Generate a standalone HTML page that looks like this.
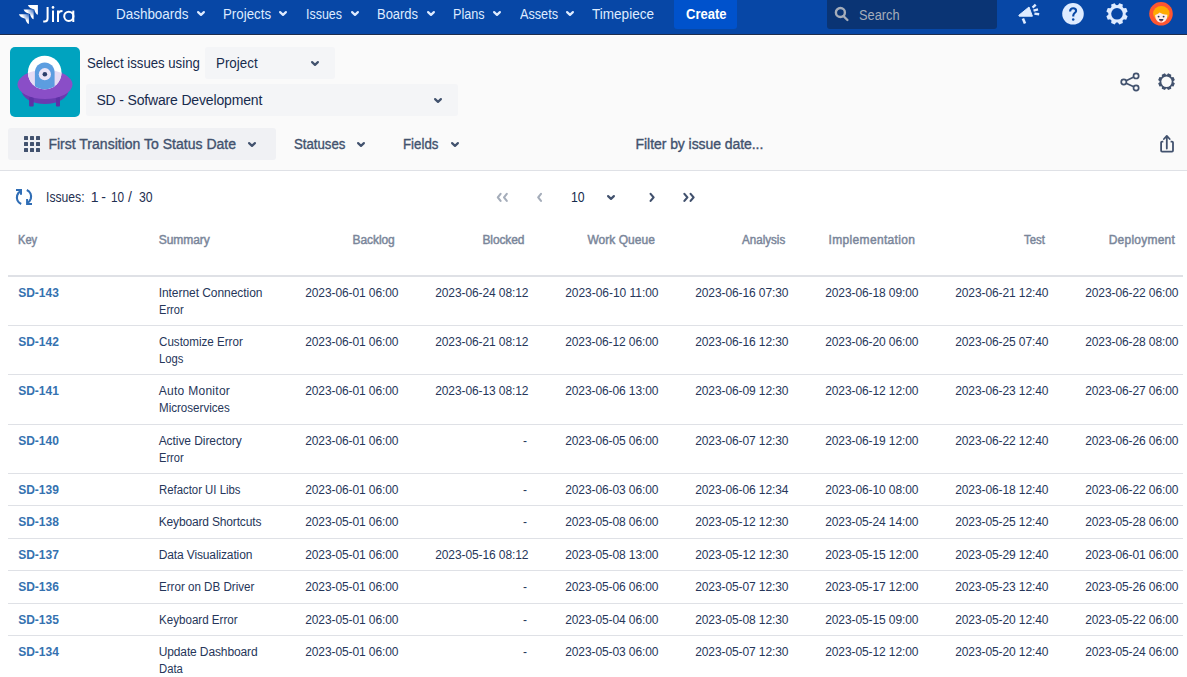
<!DOCTYPE html>
<html><head><meta charset="utf-8"><style>
html,body{margin:0;padding:0;}
body{width:1187px;height:677px;overflow:hidden;position:relative;background:#FFFFFF;font-family:"Liberation Sans",sans-serif;}
.t{position:absolute;white-space:nowrap;}
svg{overflow:visible}
</style></head><body>
<div style="position:absolute;left:0;top:0;width:1187px;height:34px;background:#0747A6"></div>
<div style="position:absolute;left:0;top:34px;width:1187px;height:1px;background:#1E2D4D"></div>
<div style="position:absolute;left:0;top:35px;width:1187px;height:1px;background:#FFFFFF"></div>
<svg style="position:absolute;left:0;top:0" width="90" height="34" viewBox="0 0 90 34">
<defs><radialGradient id="g1" gradientUnits="userSpaceOnUse" cx="37.9" cy="5" r="9"><stop offset="0.15" stop-color="#5b86cc"/><stop offset="0.75" stop-color="#fff"/></radialGradient></defs>
<g><path d="M27.9 5 H37.9 V14.7 C36.2 14.3 35 12.6 34.3 9.5 C31.4 8.8 28.8 7.6 27.9 5 Z" fill="#fff"/></g>
<g transform="translate(-4.3 4.6)"><path d="M27.9 5 H37.9 V14.7 C36.2 14.3 35 12.6 34.3 9.5 C31.4 8.8 28.8 7.6 27.9 5 Z" fill="url(#g1)"/></g>
<g transform="translate(-9 9.2)"><path d="M27.9 5 H37.9 V14.7 C36.2 14.3 35 12.6 34.3 9.5 C31.4 8.8 28.8 7.6 27.9 5 Z" fill="url(#g1)"/></g>
<path d="M47.6 7 V18.2 C47.6 20.8 46.4 21.6 44.6 21.6 H43.2" stroke="#fff" stroke-width="2" fill="none"/>
<circle cx="53" cy="7.4" r="1.3" fill="#fff"/>
<path d="M53 10.6 V22" stroke="#fff" stroke-width="2" fill="none"/>
<path d="M58 10.6 V22 M58 15 C58 12.3 59.8 11 62.5 11" stroke="#fff" stroke-width="2" fill="none"/>
<circle cx="68.8" cy="16.3" r="4.6" stroke="#fff" stroke-width="2" fill="none"/>
<path d="M73.3 10.6 V22" stroke="#fff" stroke-width="2" fill="none"/>
</svg>
<div class="t" style="left:115.50px;top:5.00px;font-size:14px;line-height:18px;color:#DEEBFF;transform:scaleX(0.9603);transform-origin:0 0;">Dashboards</div>
<svg style="position:absolute;left:195.4px;top:9px" width="12" height="9"><path d="M3.1 3.1 L6.0 5.9 L8.9 3.1" stroke="#DEEBFF" stroke-width="2.2" fill="none" stroke-linecap="round" stroke-linejoin="round"/></svg>
<div class="t" style="left:223.00px;top:5.00px;font-size:14px;line-height:18px;color:#DEEBFF;transform:scaleX(0.9496);transform-origin:0 0;">Projects</div>
<svg style="position:absolute;left:277.4px;top:9px" width="12" height="9"><path d="M3.1 3.1 L6.0 5.9 L8.9 3.1" stroke="#DEEBFF" stroke-width="2.2" fill="none" stroke-linecap="round" stroke-linejoin="round"/></svg>
<div class="t" style="left:305.50px;top:5.00px;font-size:14px;line-height:18px;color:#DEEBFF;transform:scaleX(0.8900);transform-origin:0 0;">Issues</div>
<svg style="position:absolute;left:348.6px;top:9px" width="12" height="9"><path d="M3.1 3.1 L6.0 5.9 L8.9 3.1" stroke="#DEEBFF" stroke-width="2.2" fill="none" stroke-linecap="round" stroke-linejoin="round"/></svg>
<div class="t" style="left:376.80px;top:5.00px;font-size:14px;line-height:18px;color:#DEEBFF;transform:scaleX(0.9245);transform-origin:0 0;">Boards</div>
<svg style="position:absolute;left:424.8px;top:9px" width="12" height="9"><path d="M3.1 3.1 L6.0 5.9 L8.9 3.1" stroke="#DEEBFF" stroke-width="2.2" fill="none" stroke-linecap="round" stroke-linejoin="round"/></svg>
<div class="t" style="left:453.00px;top:5.00px;font-size:14px;line-height:18px;color:#DEEBFF;transform:scaleX(0.9029);transform-origin:0 0;">Plans</div>
<svg style="position:absolute;left:491px;top:9px" width="12" height="9"><path d="M3.1 3.1 L6.0 5.9 L8.9 3.1" stroke="#DEEBFF" stroke-width="2.2" fill="none" stroke-linecap="round" stroke-linejoin="round"/></svg>
<div class="t" style="left:519.50px;top:5.00px;font-size:14px;line-height:18px;color:#DEEBFF;transform:scaleX(0.9048);transform-origin:0 0;">Assets</div>
<svg style="position:absolute;left:564.2px;top:9px" width="12" height="9"><path d="M3.1 3.1 L6.0 5.9 L8.9 3.1" stroke="#DEEBFF" stroke-width="2.2" fill="none" stroke-linecap="round" stroke-linejoin="round"/></svg>
<div class="t" style="left:592.00px;top:5.00px;font-size:14px;line-height:18px;color:#DEEBFF;transform:scaleX(0.9680);transform-origin:0 0;">Timepiece</div>
<div style="position:absolute;left:674px;top:-3px;width:63px;height:31.8px;background:#0052CC;border-radius:3px"></div>
<div class="t" style="left:685.80px;top:5.00px;font-size:14px;line-height:18px;color:#FFFFFF;font-weight:bold;transform:scaleX(0.9289);transform-origin:0 0;">Create</div>
<div style="position:absolute;left:827px;top:-3px;width:170px;height:31.5px;background:#0A3474;border-radius:3px"></div>
<svg style="position:absolute;left:833px;top:6px" width="18" height="16"><circle cx="7.4" cy="6.5" r="4.5" stroke="#A5ADBA" stroke-width="2.4" fill="none"/><path d="M10.4 10 L14.4 14" stroke="#A5ADBA" stroke-width="2.4" stroke-linecap="round"/></svg>
<div class="t" style="left:859.40px;top:6.00px;font-size:14px;line-height:18px;color:#A5ADBA;transform:scaleX(0.9154);transform-origin:0 0;">Search</div>
<svg style="position:absolute;left:1010px;top:0" width="177" height="34">
<path d="M8.8 15.3 L19 7 L22.4 16.2 L9.2 16.2 Z" fill="#DEEBFF" stroke="#DEEBFF" stroke-width="1" stroke-linejoin="round"/>
<path d="M12.9 18.4 L15 23.4" stroke="#DEEBFF" stroke-width="2.6"/>
<path d="M22.6 7.7 L25.7 4.6 M23.5 10.6 L28 9.3 M24.4 13.6 L29.2 14.3" stroke="#DEEBFF" stroke-width="2.4"/>
<circle cx="63" cy="13.8" r="10.8" fill="#DEEBFF"/>
<path d="M60.1 11.4 C60.1 9.3 61.5 8.3 63.2 8.3 C65 8.3 66.1 9.5 66.1 10.9 C66.1 12.6 63.3 13.1 63.3 15.3 V16.4" stroke="#0747A6" stroke-width="2.1" fill="none"/>
<circle cx="63.2" cy="19.4" r="1.25" fill="#0747A6"/>
</svg>
<svg style="position:absolute;left:1100px;top:0" width="36" height="34"><path d="M25.66 14.68 L27.64 16.15 L26.19 19.66 L23.74 19.30 L23.46 19.63 L23.15 19.95 L22.83 20.26 L22.50 20.54 L22.86 22.99 L19.35 24.44 L17.88 22.46 L17.44 22.49 L17.00 22.50 L16.56 22.49 L16.12 22.46 L14.65 24.44 L11.14 22.99 L11.50 20.54 L11.17 20.26 L10.85 19.95 L10.54 19.63 L10.26 19.30 L7.81 19.66 L6.36 16.15 L8.34 14.68 L8.31 14.24 L8.30 13.80 L8.31 13.36 L8.34 12.92 L6.36 11.45 L7.81 7.94 L10.26 8.30 L10.54 7.97 L10.85 7.65 L11.17 7.34 L11.50 7.06 L11.14 4.61 L14.65 3.16 L16.12 5.14 L16.56 5.11 L17.00 5.10 L17.44 5.11 L17.88 5.14 L19.35 3.16 L22.86 4.61 L22.50 7.06 L22.83 7.34 L23.15 7.65 L23.46 7.97 L23.74 8.30 L26.19 7.94 L27.64 11.45 L25.66 12.92 L25.69 13.36 L25.70 13.80 L25.69 14.24Z" fill="#DEEBFF"/><circle cx="17" cy="13.8" r="5.8" fill="#0747A6"/></svg>
<svg style="position:absolute;left:1145px;top:0" width="32" height="34">
<circle cx="16" cy="13.8" r="11.8" fill="#FF5630"/>
<ellipse cx="16.3" cy="13.4" rx="8.2" ry="7.4" fill="#FFAB00"/>
<path d="M10.2 15 C11.8 14.6 13.6 13.6 14.6 12.6 C16.2 13.8 19 14.6 22.4 14.8 C22.4 19.5 20 22.6 16.3 22.6 C12.6 22.6 10.2 19.8 10.2 15Z" fill="#FFEBE6"/>
<circle cx="13.6" cy="16.6" r="0.95" fill="#253858"/><circle cx="18.6" cy="16.6" r="0.95" fill="#253858"/>
<path d="M14 19.1 H18.4 C18.4 20.6 17.5 21.3 16.2 21.3 C14.9 21.3 14 20.6 14 19.1Z" fill="#253858"/>
<path d="M15 20.7 C15.6 21.2 16.8 21.2 17.4 20.7" stroke="#FF5630" stroke-width="0.9" fill="none"/>
</svg>
<div style="position:absolute;left:0;top:36px;width:1187px;height:134px;background:#FAFAFA"></div>
<div style="position:absolute;left:0;top:170px;width:1187px;height:1px;background:#DFE1E6"></div>
<svg style="position:absolute;left:10px;top:47px" width="70" height="70" viewBox="0 0 70 70">
<rect width="70" height="70" rx="5" fill="#00A3BF"/>
<defs><clipPath id="dome"><circle cx="34.7" cy="25.5" r="16.8"/></clipPath></defs>
<ellipse cx="35" cy="43" rx="23.5" ry="14" fill="#6A3BB0"/>
<rect x="19.1" y="50" width="4.6" height="9.6" rx="1" fill="#5E31A6"/>
<rect x="45.9" y="50" width="4.1" height="9.6" rx="1" fill="#5E31A6"/>
<ellipse cx="35" cy="37.5" rx="27.5" ry="14.6" fill="#8A4EC7"/>
<circle cx="34.7" cy="25.5" r="16.8" fill="#FFFFFF"/>
<ellipse cx="35" cy="37.5" rx="27.5" ry="14.6" fill="#E6DCF4" clip-path="url(#dome)"/>
<path d="M24.9 45 V25.4 C24.9 19.9 29.3 15.6 34.75 15.6 C40.2 15.6 44.6 19.9 44.6 25.4 V45 Z" fill="#5C9DE0" clip-path="url(#dome)"/>
<circle cx="34.85" cy="27.2" r="6.1" fill="#EAE4F7"/>
<circle cx="34.85" cy="27.2" r="2.3" fill="#2C3E6B"/>
</svg>
<div class="t" style="left:86.60px;top:54.00px;font-size:14px;line-height:18px;color:#172B4D;transform:scaleX(0.9412);transform-origin:0 0;">Select issues using</div>
<div style="position:absolute;left:205px;top:47px;width:130px;height:32px;background:#F4F5F7;border-radius:3px"></div>
<div class="t" style="left:215.80px;top:54.00px;font-size:14px;line-height:18px;color:#172B4D;transform:scaleX(0.9552);transform-origin:0 0;">Project</div>
<svg style="position:absolute;left:309px;top:59px" width="12" height="9"><path d="M3.1 3.1 L6.0 5.9 L8.9 3.1" stroke="#42526E" stroke-width="2.2" fill="none" stroke-linecap="round" stroke-linejoin="round"/></svg>
<div style="position:absolute;left:86px;top:84px;width:372px;height:32px;background:#F4F5F7;border-radius:3px"></div>
<div class="t" style="left:96.40px;top:91.00px;font-size:14px;line-height:18px;color:#172B4D;letter-spacing:-0.163px;">SD - Sofware Development</div>
<svg style="position:absolute;left:432px;top:95.5px" width="12" height="9"><path d="M3.1 3.1 L6.0 5.9 L8.9 3.1" stroke="#42526E" stroke-width="2.2" fill="none" stroke-linecap="round" stroke-linejoin="round"/></svg>
<svg style="position:absolute;left:1115px;top:68px" width="70" height="30">
<circle cx="8.8" cy="14" r="2.6" stroke="#42526E" stroke-width="1.7" fill="none"/>
<circle cx="21.1" cy="7.9" r="2.6" stroke="#42526E" stroke-width="1.7" fill="none"/>
<circle cx="21.1" cy="20" r="2.6" stroke="#42526E" stroke-width="1.7" fill="none"/>
<path d="M11.1 12.8 L18.8 9.1 M11.1 15.2 L18.8 18.8" stroke="#42526E" stroke-width="1.7"/>
</svg>
<svg style="position:absolute;left:1150px;top:65px" width="34" height="34"><path d="M23.38 17.17 L24.84 18.32 L23.54 21.46 L21.70 21.24 L21.54 21.41 L21.38 21.58 L21.21 21.74 L21.04 21.90 L21.26 23.74 L18.12 25.04 L16.97 23.58 L16.74 23.60 L16.50 23.60 L16.26 23.60 L16.03 23.58 L14.88 25.04 L11.74 23.74 L11.96 21.90 L11.79 21.74 L11.62 21.58 L11.46 21.41 L11.30 21.24 L9.46 21.46 L8.16 18.32 L9.62 17.17 L9.60 16.94 L9.60 16.70 L9.60 16.46 L9.62 16.23 L8.16 15.08 L9.46 11.94 L11.30 12.16 L11.46 11.99 L11.62 11.82 L11.79 11.66 L11.96 11.50 L11.74 9.66 L14.88 8.36 L16.03 9.82 L16.26 9.80 L16.50 9.80 L16.74 9.80 L16.97 9.82 L18.12 8.36 L21.26 9.66 L21.04 11.50 L21.21 11.66 L21.38 11.82 L21.54 11.99 L21.70 12.16 L23.54 11.94 L24.84 15.08 L23.38 16.23 L23.40 16.46 L23.40 16.70 L23.40 16.94Z" fill="#42526E"/><circle cx="16.5" cy="16.7" r="5.2" fill="#FAFAFA"/></svg>
<div style="position:absolute;left:8px;top:128px;width:268px;height:32px;background:#F0F1F4;border-radius:3px"></div>
<svg style="position:absolute;left:0;top:0" width="60" height="170"><rect x="24" y="136" width="4" height="4" rx="0.5" fill="#42526E"/><rect x="24" y="142" width="4" height="4" rx="0.5" fill="#42526E"/><rect x="24" y="148" width="4" height="4" rx="0.5" fill="#42526E"/><rect x="30" y="136" width="4" height="4" rx="0.5" fill="#42526E"/><rect x="30" y="142" width="4" height="4" rx="0.5" fill="#42526E"/><rect x="30" y="148" width="4" height="4" rx="0.5" fill="#42526E"/><rect x="36" y="136" width="4" height="4" rx="0.5" fill="#42526E"/><rect x="36" y="142" width="4" height="4" rx="0.5" fill="#42526E"/><rect x="36" y="148" width="4" height="4" rx="0.5" fill="#42526E"/></svg>
<div class="t" style="left:48.40px;top:135.00px;font-size:14px;line-height:18px;color:#42526E;-webkit-text-stroke:0.35px #42526E;letter-spacing:0.012px;">First Transition To Status Date</div>
<svg style="position:absolute;left:246px;top:140px" width="12" height="9"><path d="M3.1 3.1 L6.0 5.9 L8.9 3.1" stroke="#42526E" stroke-width="2.2" fill="none" stroke-linecap="round" stroke-linejoin="round"/></svg>
<div class="t" style="left:293.50px;top:135.00px;font-size:14px;line-height:18px;color:#42526E;-webkit-text-stroke:0.35px #42526E;transform:scaleX(0.9431);transform-origin:0 0;">Statuses</div>
<svg style="position:absolute;left:355px;top:140px" width="12" height="9"><path d="M3.1 3.1 L6.0 5.9 L8.9 3.1" stroke="#42526E" stroke-width="2.2" fill="none" stroke-linecap="round" stroke-linejoin="round"/></svg>
<div class="t" style="left:403.00px;top:135.00px;font-size:14px;line-height:18px;color:#42526E;-webkit-text-stroke:0.35px #42526E;transform:scaleX(0.9478);transform-origin:0 0;">Fields</div>
<svg style="position:absolute;left:449px;top:140px" width="12" height="9"><path d="M3.1 3.1 L6.0 5.9 L8.9 3.1" stroke="#42526E" stroke-width="2.2" fill="none" stroke-linecap="round" stroke-linejoin="round"/></svg>
<div class="t" style="left:635.60px;top:135.00px;font-size:14px;line-height:18px;color:#42526E;-webkit-text-stroke:0.35px #42526E;letter-spacing:-0.066px;">Filter by issue date...</div>
<svg style="position:absolute;left:1150px;top:128px" width="30" height="30">
<path d="M13.3 13.6 H12.1 Q11.1 13.6 11.1 14.6 V22.6 Q11.1 23.6 12.1 23.6 H22 Q23 23.6 23 22.6 V14.6 Q23 13.6 22 13.6 H20.6" stroke="#42526E" stroke-width="1.8" fill="none"/>
<path d="M16.8 20.6 V8.2 M13.9 11 L16.8 7.9 L19.7 11" stroke="#42526E" stroke-width="1.8" fill="none" stroke-linejoin="round" stroke-linecap="round"/>
</svg>
<div style="position:absolute;left:0;top:171px;width:1187px;height:506px;background:#FFFFFF"></div>
<svg style="position:absolute;left:10px;top:183px" width="30" height="27">
<path d="M11.2 21 C7.6 19.5 6.3 15.8 7.2 12.3 C7.8 10.2 9.2 8.8 11 8" stroke="#2F6DB5" stroke-width="2.2" fill="none"/>
<path d="M6 6.9 H11 V11.8" stroke="#2F6DB5" stroke-width="2" fill="none"/>
<path d="M16.8 6.9 C20.4 8.5 21.7 12.2 20.8 15.7 C20.2 17.8 18.8 19.2 17 20" stroke="#2F6DB5" stroke-width="2.2" fill="none"/>
<path d="M17.1 16 V21 H22" stroke="#2F6DB5" stroke-width="2" fill="none"/>
</svg>
<div class="t" style="left:45.90px;top:188.00px;font-size:14px;line-height:18px;color:#1F3052;transform:scaleX(0.8703);transform-origin:0 0;">Issues:</div>
<div class="t" style="left:90.80px;top:188.00px;font-size:14px;line-height:18px;color:#1F3052;">1</div>
<div class="t" style="left:101.20px;top:188.00px;font-size:14px;line-height:18px;color:#1F3052;">-</div>
<div class="t" style="left:110.80px;top:188.00px;font-size:14px;line-height:18px;color:#1F3052;transform:scaleX(0.8424);transform-origin:0 0;">10</div>
<div class="t" style="left:128.00px;top:188.00px;font-size:14px;line-height:18px;color:#1F3052;">/</div>
<div class="t" style="left:138.60px;top:188.00px;font-size:14px;line-height:18px;color:#1F3052;transform:scaleX(0.8746);transform-origin:0 0;">30</div>
<svg style="position:absolute;left:490px;top:185px" width="220" height="24">
<path d="M10.6 8.9 L7.8 12.4 L10.6 15.9 M16.8 8.9 L14 12.4 L16.8 15.9" stroke="#A5ADBA" stroke-width="2.1" fill="none" stroke-linecap="round" stroke-linejoin="round"/>
<path d="M51 8.9 L48.2 12.4 L51 15.9" stroke="#A5ADBA" stroke-width="2.1" fill="none" stroke-linecap="round" stroke-linejoin="round"/>
<path d="M160.6 8.9 L163.6 12.4 L160.6 15.9" stroke="#42526E" stroke-width="2.2" fill="none" stroke-linecap="round" stroke-linejoin="round"/>
<path d="M194.4 8.9 L197.4 12.4 L194.4 15.9 M200.6 8.9 L203.6 12.4 L200.6 15.9" stroke="#42526E" stroke-width="2.2" fill="none" stroke-linecap="round" stroke-linejoin="round"/>
</svg>
<div class="t" style="left:571.40px;top:188.00px;font-size:14px;line-height:18px;color:#172B4D;transform:scaleX(0.8746);transform-origin:0 0;">10</div>
<svg style="position:absolute;left:605px;top:192.6px" width="12" height="9"><path d="M3.1 3.1 L6.0 5.9 L8.9 3.1" stroke="#42526E" stroke-width="2.2" fill="none" stroke-linecap="round" stroke-linejoin="round"/></svg>
<div class="t" style="left:18.20px;top:232.00px;font-size:12px;line-height:16px;color:#7A869A;-webkit-text-stroke:0.45px #7A869A;transform:scaleX(0.9275);transform-origin:0 0;">Key</div>
<div class="t" style="left:158.70px;top:232.00px;font-size:12px;line-height:16px;color:#7A869A;-webkit-text-stroke:0.45px #7A869A;letter-spacing:-0.042px;">Summary</div>
<div class="t" style="left:352.60px;top:232.00px;font-size:12px;line-height:16px;color:#7A869A;-webkit-text-stroke:0.45px #7A869A;letter-spacing:-0.083px;">Backlog</div>
<div class="t" style="left:482.50px;top:232.00px;font-size:12px;line-height:16px;color:#7A869A;-webkit-text-stroke:0.45px #7A869A;letter-spacing:-0.133px;">Blocked</div>
<div class="t" style="left:587.40px;top:232.00px;font-size:12px;line-height:16px;color:#7A869A;-webkit-text-stroke:0.45px #7A869A;letter-spacing:0.039px;">Work Queue</div>
<div class="t" style="left:741.50px;top:232.00px;font-size:12px;line-height:16px;color:#7A869A;-webkit-text-stroke:0.45px #7A869A;transform:scaleX(0.9664);transform-origin:0 0;">Analysis</div>
<div class="t" style="left:828.50px;top:232.00px;font-size:12px;line-height:16px;color:#7A869A;-webkit-text-stroke:0.45px #7A869A;letter-spacing:0.342px;">Implementation</div>
<div class="t" style="left:1023.90px;top:232.00px;font-size:12px;line-height:16px;color:#7A869A;-webkit-text-stroke:0.45px #7A869A;transform:scaleX(0.9455);transform-origin:0 0;">Test</div>
<div class="t" style="left:1108.70px;top:232.00px;font-size:12px;line-height:16px;color:#7A869A;-webkit-text-stroke:0.45px #7A869A;letter-spacing:0.228px;">Deployment</div>
<div style="position:absolute;left:8px;top:275px;width:1175px;height:2px;background:#DFE1E6"></div>
<div style="position:absolute;left:8px;top:325px;width:1175px;height:1px;background:#DFE1E6"></div>
<div style="position:absolute;left:8px;top:374px;width:1175px;height:1px;background:#DFE1E6"></div>
<div style="position:absolute;left:8px;top:424px;width:1175px;height:1px;background:#DFE1E6"></div>
<div style="position:absolute;left:8px;top:473px;width:1175px;height:1px;background:#DFE1E6"></div>
<div style="position:absolute;left:8px;top:505px;width:1175px;height:1px;background:#DFE1E6"></div>
<div style="position:absolute;left:8px;top:538px;width:1175px;height:1px;background:#DFE1E6"></div>
<div style="position:absolute;left:8px;top:570px;width:1175px;height:1px;background:#DFE1E6"></div>
<div style="position:absolute;left:8px;top:603px;width:1175px;height:1px;background:#DFE1E6"></div>
<div style="position:absolute;left:8px;top:635px;width:1175px;height:1px;background:#DFE1E6"></div>
<div class="t" style="left:18.20px;top:285.00px;font-size:12px;line-height:16px;color:#3572B0;font-weight:bold;">SD-143</div>
<div class="t" style="left:158.70px;top:285.00px;font-size:12px;line-height:16px;color:#26365A;letter-spacing:-0.053px;">Internet Connection</div>
<div class="t" style="left:158.70px;top:302.00px;font-size:12px;line-height:16px;color:#26365A;transform:scaleX(0.9231);transform-origin:0 0;">Error</div>
<div class="t" style="left:305.20px;top:285.00px;font-size:12px;line-height:16px;color:#26365A;letter-spacing:-0.097px;">2023-06-01 06:00</div>
<div class="t" style="left:435.20px;top:285.00px;font-size:12px;line-height:16px;color:#26365A;letter-spacing:-0.097px;">2023-06-24 08:12</div>
<div class="t" style="left:565.20px;top:285.00px;font-size:12px;line-height:16px;color:#26365A;letter-spacing:-0.037px;">2023-06-10 11:00</div>
<div class="t" style="left:695.20px;top:285.00px;font-size:12px;line-height:16px;color:#26365A;letter-spacing:-0.097px;">2023-06-16 07:30</div>
<div class="t" style="left:825.20px;top:285.00px;font-size:12px;line-height:16px;color:#26365A;letter-spacing:-0.097px;">2023-06-18 09:00</div>
<div class="t" style="left:955.20px;top:285.00px;font-size:12px;line-height:16px;color:#26365A;letter-spacing:-0.097px;">2023-06-21 12:40</div>
<div class="t" style="left:1085.20px;top:285.00px;font-size:12px;line-height:16px;color:#26365A;letter-spacing:-0.097px;">2023-06-22 06:00</div>
<div class="t" style="left:18.20px;top:334.00px;font-size:12px;line-height:16px;color:#3572B0;font-weight:bold;">SD-142</div>
<div class="t" style="left:158.70px;top:334.00px;font-size:12px;line-height:16px;color:#26365A;transform:scaleX(0.9666);transform-origin:0 0;">Customize Error</div>
<div class="t" style="left:158.70px;top:351.00px;font-size:12px;line-height:16px;color:#26365A;transform:scaleX(0.9385);transform-origin:0 0;">Logs</div>
<div class="t" style="left:305.20px;top:334.00px;font-size:12px;line-height:16px;color:#26365A;letter-spacing:-0.097px;">2023-06-01 06:00</div>
<div class="t" style="left:435.20px;top:334.00px;font-size:12px;line-height:16px;color:#26365A;letter-spacing:-0.097px;">2023-06-21 08:12</div>
<div class="t" style="left:565.20px;top:334.00px;font-size:12px;line-height:16px;color:#26365A;letter-spacing:-0.097px;">2023-06-12 06:00</div>
<div class="t" style="left:695.20px;top:334.00px;font-size:12px;line-height:16px;color:#26365A;letter-spacing:-0.097px;">2023-06-16 12:30</div>
<div class="t" style="left:825.20px;top:334.00px;font-size:12px;line-height:16px;color:#26365A;letter-spacing:-0.097px;">2023-06-20 06:00</div>
<div class="t" style="left:955.20px;top:334.00px;font-size:12px;line-height:16px;color:#26365A;letter-spacing:-0.097px;">2023-06-25 07:40</div>
<div class="t" style="left:1085.20px;top:334.00px;font-size:12px;line-height:16px;color:#26365A;letter-spacing:-0.097px;">2023-06-28 08:00</div>
<div class="t" style="left:18.20px;top:383.00px;font-size:12px;line-height:16px;color:#3572B0;font-weight:bold;">SD-141</div>
<div class="t" style="left:158.70px;top:383.00px;font-size:12px;line-height:16px;color:#26365A;letter-spacing:0.286px;">Auto Monitor</div>
<div class="t" style="left:158.70px;top:400.00px;font-size:12px;line-height:16px;color:#26365A;transform:scaleX(0.9652);transform-origin:0 0;">Microservices</div>
<div class="t" style="left:305.20px;top:383.00px;font-size:12px;line-height:16px;color:#26365A;letter-spacing:-0.097px;">2023-06-01 06:00</div>
<div class="t" style="left:435.20px;top:383.00px;font-size:12px;line-height:16px;color:#26365A;letter-spacing:-0.097px;">2023-06-13 08:12</div>
<div class="t" style="left:565.20px;top:383.00px;font-size:12px;line-height:16px;color:#26365A;letter-spacing:-0.097px;">2023-06-06 13:00</div>
<div class="t" style="left:695.20px;top:383.00px;font-size:12px;line-height:16px;color:#26365A;letter-spacing:-0.097px;">2023-06-09 12:30</div>
<div class="t" style="left:825.20px;top:383.00px;font-size:12px;line-height:16px;color:#26365A;letter-spacing:-0.097px;">2023-06-12 12:00</div>
<div class="t" style="left:955.20px;top:383.00px;font-size:12px;line-height:16px;color:#26365A;letter-spacing:-0.097px;">2023-06-23 12:40</div>
<div class="t" style="left:1085.20px;top:383.00px;font-size:12px;line-height:16px;color:#26365A;letter-spacing:-0.097px;">2023-06-27 06:00</div>
<div class="t" style="left:18.20px;top:433.00px;font-size:12px;line-height:16px;color:#3572B0;font-weight:bold;">SD-140</div>
<div class="t" style="left:158.70px;top:433.00px;font-size:12px;line-height:16px;color:#26365A;letter-spacing:-0.067px;">Active Directory</div>
<div class="t" style="left:158.70px;top:450.00px;font-size:12px;line-height:16px;color:#26365A;transform:scaleX(0.9231);transform-origin:0 0;">Error</div>
<div class="t" style="left:305.20px;top:433.00px;font-size:12px;line-height:16px;color:#26365A;letter-spacing:-0.097px;">2023-06-01 06:00</div>
<div class="t" style="left:523.00px;top:433.00px;font-size:12px;line-height:16px;color:#26365A;">-</div>
<div class="t" style="left:565.20px;top:433.00px;font-size:12px;line-height:16px;color:#26365A;letter-spacing:-0.097px;">2023-06-05 06:00</div>
<div class="t" style="left:695.20px;top:433.00px;font-size:12px;line-height:16px;color:#26365A;letter-spacing:-0.097px;">2023-06-07 12:30</div>
<div class="t" style="left:825.20px;top:433.00px;font-size:12px;line-height:16px;color:#26365A;letter-spacing:-0.097px;">2023-06-19 12:00</div>
<div class="t" style="left:955.20px;top:433.00px;font-size:12px;line-height:16px;color:#26365A;letter-spacing:-0.097px;">2023-06-22 12:40</div>
<div class="t" style="left:1085.20px;top:433.00px;font-size:12px;line-height:16px;color:#26365A;letter-spacing:-0.097px;">2023-06-26 06:00</div>
<div class="t" style="left:18.20px;top:482.00px;font-size:12px;line-height:16px;color:#3572B0;font-weight:bold;">SD-139</div>
<div class="t" style="left:158.70px;top:482.00px;font-size:12px;line-height:16px;color:#26365A;transform:scaleX(0.9471);transform-origin:0 0;">Refactor UI Libs</div>
<div class="t" style="left:305.20px;top:482.00px;font-size:12px;line-height:16px;color:#26365A;letter-spacing:-0.097px;">2023-06-01 06:00</div>
<div class="t" style="left:523.00px;top:482.00px;font-size:12px;line-height:16px;color:#26365A;">-</div>
<div class="t" style="left:565.20px;top:482.00px;font-size:12px;line-height:16px;color:#26365A;letter-spacing:-0.097px;">2023-06-03 06:00</div>
<div class="t" style="left:695.20px;top:482.00px;font-size:12px;line-height:16px;color:#26365A;letter-spacing:-0.097px;">2023-06-06 12:34</div>
<div class="t" style="left:825.20px;top:482.00px;font-size:12px;line-height:16px;color:#26365A;letter-spacing:-0.097px;">2023-06-10 08:00</div>
<div class="t" style="left:955.20px;top:482.00px;font-size:12px;line-height:16px;color:#26365A;letter-spacing:-0.097px;">2023-06-18 12:40</div>
<div class="t" style="left:1085.20px;top:482.00px;font-size:12px;line-height:16px;color:#26365A;letter-spacing:-0.097px;">2023-06-22 06:00</div>
<div class="t" style="left:18.20px;top:514.00px;font-size:12px;line-height:16px;color:#3572B0;font-weight:bold;">SD-138</div>
<div class="t" style="left:158.70px;top:514.00px;font-size:12px;line-height:16px;color:#26365A;letter-spacing:-0.159px;">Keyboard Shortcuts</div>
<div class="t" style="left:305.20px;top:514.00px;font-size:12px;line-height:16px;color:#26365A;letter-spacing:-0.097px;">2023-05-01 06:00</div>
<div class="t" style="left:523.00px;top:514.00px;font-size:12px;line-height:16px;color:#26365A;">-</div>
<div class="t" style="left:565.20px;top:514.00px;font-size:12px;line-height:16px;color:#26365A;letter-spacing:-0.097px;">2023-05-08 06:00</div>
<div class="t" style="left:695.20px;top:514.00px;font-size:12px;line-height:16px;color:#26365A;letter-spacing:-0.097px;">2023-05-12 12:30</div>
<div class="t" style="left:825.20px;top:514.00px;font-size:12px;line-height:16px;color:#26365A;letter-spacing:-0.097px;">2023-05-24 14:00</div>
<div class="t" style="left:955.20px;top:514.00px;font-size:12px;line-height:16px;color:#26365A;letter-spacing:-0.097px;">2023-05-25 12:40</div>
<div class="t" style="left:1085.20px;top:514.00px;font-size:12px;line-height:16px;color:#26365A;letter-spacing:-0.097px;">2023-05-28 06:00</div>
<div class="t" style="left:18.20px;top:547.00px;font-size:12px;line-height:16px;color:#3572B0;font-weight:bold;">SD-137</div>
<div class="t" style="left:158.70px;top:547.00px;font-size:12px;line-height:16px;color:#26365A;letter-spacing:-0.126px;">Data Visualization</div>
<div class="t" style="left:305.20px;top:547.00px;font-size:12px;line-height:16px;color:#26365A;letter-spacing:-0.097px;">2023-05-01 06:00</div>
<div class="t" style="left:435.20px;top:547.00px;font-size:12px;line-height:16px;color:#26365A;letter-spacing:-0.097px;">2023-05-16 08:12</div>
<div class="t" style="left:565.20px;top:547.00px;font-size:12px;line-height:16px;color:#26365A;letter-spacing:-0.097px;">2023-05-08 13:00</div>
<div class="t" style="left:695.20px;top:547.00px;font-size:12px;line-height:16px;color:#26365A;letter-spacing:-0.097px;">2023-05-12 12:30</div>
<div class="t" style="left:825.20px;top:547.00px;font-size:12px;line-height:16px;color:#26365A;letter-spacing:-0.097px;">2023-05-15 12:00</div>
<div class="t" style="left:955.20px;top:547.00px;font-size:12px;line-height:16px;color:#26365A;letter-spacing:-0.097px;">2023-05-29 12:40</div>
<div class="t" style="left:1085.20px;top:547.00px;font-size:12px;line-height:16px;color:#26365A;letter-spacing:-0.097px;">2023-06-01 06:00</div>
<div class="t" style="left:18.20px;top:579.00px;font-size:12px;line-height:16px;color:#3572B0;font-weight:bold;">SD-136</div>
<div class="t" style="left:158.70px;top:579.00px;font-size:12px;line-height:16px;color:#26365A;transform:scaleX(0.9666);transform-origin:0 0;">Error on DB Driver</div>
<div class="t" style="left:305.20px;top:579.00px;font-size:12px;line-height:16px;color:#26365A;letter-spacing:-0.097px;">2023-05-01 06:00</div>
<div class="t" style="left:523.00px;top:579.00px;font-size:12px;line-height:16px;color:#26365A;">-</div>
<div class="t" style="left:565.20px;top:579.00px;font-size:12px;line-height:16px;color:#26365A;letter-spacing:-0.097px;">2023-05-06 06:00</div>
<div class="t" style="left:695.20px;top:579.00px;font-size:12px;line-height:16px;color:#26365A;letter-spacing:-0.097px;">2023-05-07 12:30</div>
<div class="t" style="left:825.20px;top:579.00px;font-size:12px;line-height:16px;color:#26365A;letter-spacing:-0.097px;">2023-05-17 12:00</div>
<div class="t" style="left:955.20px;top:579.00px;font-size:12px;line-height:16px;color:#26365A;letter-spacing:-0.097px;">2023-05-23 12:40</div>
<div class="t" style="left:1085.20px;top:579.00px;font-size:12px;line-height:16px;color:#26365A;letter-spacing:-0.097px;">2023-05-26 06:00</div>
<div class="t" style="left:18.20px;top:612.00px;font-size:12px;line-height:16px;color:#3572B0;font-weight:bold;">SD-135</div>
<div class="t" style="left:158.70px;top:612.00px;font-size:12px;line-height:16px;color:#26365A;transform:scaleX(0.9662);transform-origin:0 0;">Keyboard Error</div>
<div class="t" style="left:305.20px;top:612.00px;font-size:12px;line-height:16px;color:#26365A;letter-spacing:-0.097px;">2023-05-01 06:00</div>
<div class="t" style="left:523.00px;top:612.00px;font-size:12px;line-height:16px;color:#26365A;">-</div>
<div class="t" style="left:565.20px;top:612.00px;font-size:12px;line-height:16px;color:#26365A;letter-spacing:-0.097px;">2023-05-04 06:00</div>
<div class="t" style="left:695.20px;top:612.00px;font-size:12px;line-height:16px;color:#26365A;letter-spacing:-0.097px;">2023-05-08 12:30</div>
<div class="t" style="left:825.20px;top:612.00px;font-size:12px;line-height:16px;color:#26365A;letter-spacing:-0.097px;">2023-05-15 09:00</div>
<div class="t" style="left:955.20px;top:612.00px;font-size:12px;line-height:16px;color:#26365A;letter-spacing:-0.097px;">2023-05-20 12:40</div>
<div class="t" style="left:1085.20px;top:612.00px;font-size:12px;line-height:16px;color:#26365A;letter-spacing:-0.097px;">2023-05-22 06:00</div>
<div class="t" style="left:18.20px;top:644.00px;font-size:12px;line-height:16px;color:#3572B0;font-weight:bold;">SD-134</div>
<div class="t" style="left:158.70px;top:644.00px;font-size:12px;line-height:16px;color:#26365A;letter-spacing:-0.123px;">Update Dashboard</div>
<div class="t" style="left:158.70px;top:661.00px;font-size:12px;line-height:16px;color:#26365A;transform:scaleX(0.9409);transform-origin:0 0;">Data</div>
<div class="t" style="left:305.20px;top:644.00px;font-size:12px;line-height:16px;color:#26365A;letter-spacing:-0.097px;">2023-05-01 06:00</div>
<div class="t" style="left:523.00px;top:644.00px;font-size:12px;line-height:16px;color:#26365A;">-</div>
<div class="t" style="left:565.20px;top:644.00px;font-size:12px;line-height:16px;color:#26365A;letter-spacing:-0.097px;">2023-05-03 06:00</div>
<div class="t" style="left:695.20px;top:644.00px;font-size:12px;line-height:16px;color:#26365A;letter-spacing:-0.097px;">2023-05-07 12:30</div>
<div class="t" style="left:825.20px;top:644.00px;font-size:12px;line-height:16px;color:#26365A;letter-spacing:-0.097px;">2023-05-12 12:00</div>
<div class="t" style="left:955.20px;top:644.00px;font-size:12px;line-height:16px;color:#26365A;letter-spacing:-0.097px;">2023-05-20 12:40</div>
<div class="t" style="left:1085.20px;top:644.00px;font-size:12px;line-height:16px;color:#26365A;letter-spacing:-0.097px;">2023-05-24 06:00</div>
</body></html>
